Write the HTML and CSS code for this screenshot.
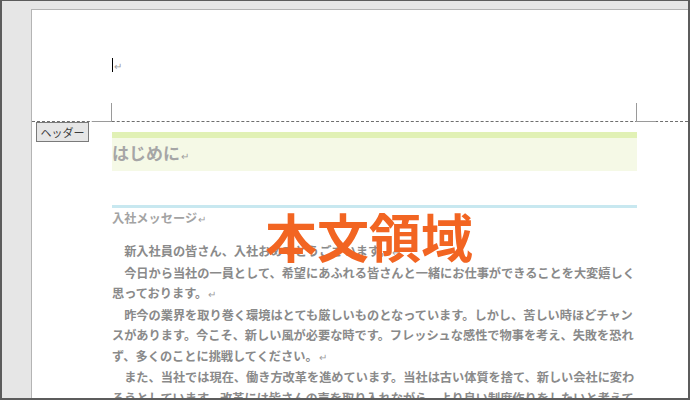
FILE: index.html
```html
<!DOCTYPE html>
<html lang="ja">
<head>
    <meta charset="UTF-8">
    <meta name="viewport" content="width=device-width, initial-scale=1.0">
    <title>本文領域</title>
    <link rel="stylesheet" href="styles.css">
</head>
<body>
    <div class="window">
        <div class="page">
            <div class="header-area">
                <div class="header-line"><span class="cursor"></span><span class="mark">↵</span></div>
                <span class="crop crop-left"></span>
                <span class="crop crop-right"></span>
                <span class="header-tab">ヘッダー</span>
            </div>

            <div class="body-area">
                <h1 class="title">はじめに<span class="mark">↵</span></h1>
                <h2 class="subtitle">入社メッセージ<span class="mark">↵</span></h2>

                <p class="para">新入社員の皆さん、入社おめでとうございます。<span class="mark">↵</span></p>
                <p class="para">今日から当社の一員として、希望にあふれる皆さんと一緒にお仕事ができることを大変嬉しく思っております。<span class="mark">↵</span></p>
                <p class="para">昨今の業界を取り巻く環境はとても厳しいものとなっています。しかし、苦しい時ほどチャンスがあります。今こそ、新しい風が必要な時です。フレッシュな感性で物事を考え、失敗を恐れず、多くのことに挑戦してください。<span class="mark">↵</span></p>
                <p class="para">また、当社では現在、働き方改革を進めています。当社は古い体質を捨て、新しい会社に変わろうとしています。改革には皆さんの声を取り入れながら、より良い制度作りをしたいと考えています。<span class="mark">↵</span></p>

                <div class="area-label">本文領域</div>
            </div>
        </div>
    </div>
</body>
</html>
```

FILE: styles.css
```css
body {
    margin: 0;
    font-family: "Noto Sans CJK JP", "Noto Sans", sans-serif;
}
.window {
    width: 690px;
    height: 400px;
    box-sizing: border-box;
    border: 2px solid #5c5c5c;
    border-top-width: 1px;
    background-color: #e6e6e6;
    padding: 8px 0 0 29px;
    overflow: hidden;
}
.page {
    height: 100%;
    background-color: white;
    border-left: 1px solid #b4b4b4;
    border-top: 1px solid #b4b4b4;
}
.header-area {
    position: relative;
    height: 112px;
    border-bottom: 1px dashed #6e6e6e;
    box-sizing: border-box;
    padding: 48px 0 0 80px;
}
.header-line {
    display: flex;
    align-items: center;
    height: 14px;
}
.cursor {
    width: 1px;
    height: 14px;
    background-color: #000;
}
.mark {
    color: #a0a0a0;
    font-size: 10px;
    font-weight: normal;
    margin-left: 1px;
}
.crop {
    position: absolute;
    bottom: -1px;
    width: 20px;
    height: 19px;
    box-sizing: border-box;
    border-bottom: 1px solid #9a9a9a;
}
.crop-left {
    left: 60px;
    border-right: 1px solid #9a9a9a;
}
.crop-right {
    left: 604px;
    border-left: 1px solid #9a9a9a;
}
.header-tab {
    position: absolute;
    top: 112px;
    left: 4px;
    width: 53px;
    height: 20px;
    box-sizing: border-box;
    border: 1px solid #7a7a7a;
    background-color: #e6e6e6;
    font-size: 11px;
    line-height: 18px;
    text-align: center;
    color: #3c3c3c;
}
.body-area {
    position: relative;
    width: 525px;
    padding: 10px 0 0 80px;
}
.title {
    margin: 0;
    height: 33px;
    border-top: 6px solid #e1f1b5;
    background-color: #f5f9e6;
    font-size: 17px;
    line-height: 29px;
    font-weight: bold;
    color: #a6a6a6;
}
.subtitle {
    margin: 34px 0 12px;
    border-top: 3px solid #c8e8f0;
    font-size: 12.2px;
    line-height: 20px;
    font-weight: bold;
    color: #a3a3a3;
}
.para {
    margin: 0;
    font-size: 12.2px;
    line-height: 20.5px;
    font-weight: bold;
    color: #8a8a8a;
    text-indent: 1em;
}
.area-label {
    position: absolute;
    top: 88px;
    left: 233px;
    font-size: 52px;
    line-height: 1;
    font-weight: bold;
    color: #f26522;
    white-space: nowrap;
}
```
